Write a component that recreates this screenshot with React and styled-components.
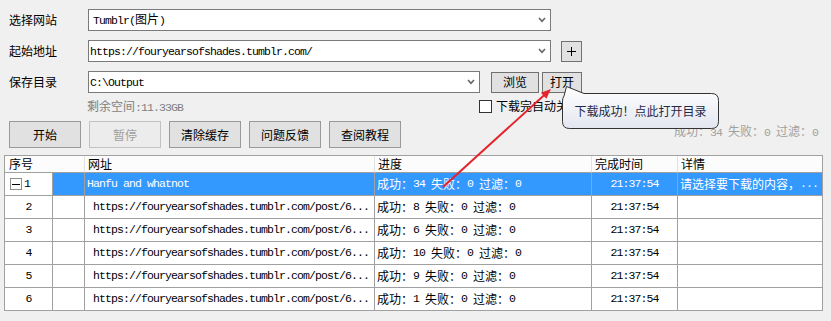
import React from 'react';
import styled, { createGlobalStyle } from 'styled-components';

const GlobalStyle = createGlobalStyle`
  html, body { margin: 0; padding: 0; background: #f0f0f0; }
  body {
    font-family: "Noto Sans CJK SC", "Noto Sans", sans-serif;
    font-size: 12px;
    color: #000;
  }
`;

const Window = styled.div`
  position: relative;
  width: 831px;
  height: 321px;
  box-sizing: border-box;
  padding: 9px 0 0 4px;
  background: #f0f0f0;
  overflow: hidden;
  display: flex;
  flex-direction: column;
`;

const Ascii = styled.span`
  font-family: "Liberation Mono", "DejaVu Sans Mono", monospace;
  font-size: 11.5px;
  letter-spacing: -0.9px;
`;

function Mixed({ text }) {
  const parts = text.split(/([\x20-\x7e]+)/);
  return parts.map((p, i) => {
    if (!p) return null;
    if (i % 2 === 1) return <Ascii key={i}>{p}</Ascii>;
    return <React.Fragment key={i}>{p}</React.Fragment>;
  });
}

const FormRow = styled.div`
  display: flex;
  align-items: center;
  height: 22px;
  padding-left: 5px;
  & + & { margin-top: 9px; }
`;

const Label = styled.div`
  width: 79px;
  flex-shrink: 0;
  line-height: 22px;
`;

const Combo = styled.div`
  box-sizing: border-box;
  width: ${p => p.$w}px;
  height: 22px;
  flex-shrink: 0;
  border: 1px solid #7a7a7a;
  background: #fff;
  display: flex;
  align-items: center;
  padding: 0 4px 0 ${p => p.$pad}px;
  white-space: pre;
`;

const ComboText = styled.span`
  flex: 1;
  overflow: hidden;
  line-height: 20px;
`;

const Chevron = () => (
  <svg width="8" height="6" viewBox="0 0 8 6">
    <path d="M1 1 L4 4.4 L7 1" fill="none" stroke="#666" strokeWidth="1.6" />
  </svg>
);

const SmallButton = styled.button`
  box-sizing: border-box;
  width: ${p => p.$w}px;
  height: ${p => p.$h}px;
  margin: 0 0 0 ${p => p.$ml}px;
  padding: 0;
  flex-shrink: 0;
  border: 1px solid #707070;
  background: #e1e1e1;
  font: inherit;
  font-size: 12px;
  color: #000;
  display: flex;
  align-items: center;
  justify-content: center;
  line-height: 1;
`;

const InfoRow = styled.div`
  display: flex;
  align-items: flex-start;
  box-sizing: border-box;
  height: 28px;
  padding: 6px 0 0 5px;
`;

const FreeSpace = styled.div`
  margin-left: 78px;
  width: 392px;
  flex-shrink: 0;
  color: #7f7f7f;
  line-height: 13px;
  white-space: pre;
`;

const CheckBox = styled.div`
  box-sizing: border-box;
  width: 13px;
  height: 13px;
  margin-top: 1px;
  border: 1px solid #333;
  background: #fff;
  flex-shrink: 0;
`;

const CheckText = styled.div`
  margin-left: 4px;
  line-height: 13px;
  white-space: nowrap;
`;

const ButtonRow = styled.div`
  display: flex;
  align-items: flex-start;
  height: 27px;
  padding-left: 5px;
  gap: 8px;
`;

const ActionButton = styled.button`
  box-sizing: border-box;
  width: 72px;
  height: 27px;
  margin: 0;
  padding: 0;
  border: 1px solid ${p => (p.disabled ? '#c2c2c2' : '#9a9a9a')};
  background: ${p => (p.disabled ? '#ececec' : '#e1e1e1')};
  color: ${p => (p.disabled ? '#a0a0a0' : '#000')};
  font: inherit;
  font-size: 12px;
  line-height: 1;
  display: flex;
  align-items: center;
  justify-content: center;
`;

const Stats = styled.div`
  margin: 4px 13px 0 auto;
  color: #a0a0a0;
  line-height: 12px;
  white-space: pre;
`;

const Grid = styled.div`
  margin-top: 7px;
  width: 819px;
  box-sizing: border-box;
  border: 1px solid #a0a0a0;
  border-bottom: none;
  background: #fff;
`;

const HeaderRow = styled.div`
  display: grid;
  grid-template-columns: 80px 290px 217px 86px 144px;
  height: 17px;
`;

const HeaderCell = styled.div`
  box-sizing: border-box;
  height: 17px;
  padding-left: ${p => p.$pl || 3}px;
  background: #fcfcfc;
  border-right: ${p => (p.$last ? 'none' : '1px solid #e2e2e2')};
  border-bottom: 1px solid #a0a0a0;
  line-height: 16px;
  white-space: nowrap;
`;

const BodyRow = styled.div`
  display: grid;
  grid-template-columns: 48px 32px 290px 217px 86px 144px;
  height: 23px;
`;

const Cell = styled.div`
  box-sizing: border-box;
  height: 23px;
  border-right: ${p => (p.$last ? 'none' : '1px solid #a0a0a0')};
  border-bottom: 1px solid #a0a0a0;
  background: ${p => (p.$sel ? '#3399ff' : '#fff')};
  color: ${p => (p.$sel ? '#fff' : '#000')};
  display: flex;
  align-items: center;
  justify-content: ${p => (p.$center ? 'center' : 'flex-start')};
  padding-left: ${p => p.$pl || 0}px;
  line-height: 14px;
  white-space: pre;
  overflow: hidden;
`;

const Expander = styled.div`
  box-sizing: border-box;
  width: 12px;
  height: 12px;
  border: 1px solid #8f8f8f;
  background: #fff;
  display: flex;
  align-items: center;
  justify-content: center;
  margin-right: 2px;
  &::before {
    content: '';
    width: 8px;
    height: 1px;
    background: #000;
  }
`;

const BalloonWrap = styled.div`
  position: absolute;
  left: 558px;
  top: 82px;
  width: 165px;
  height: 50px;
  box-sizing: border-box;
  padding: 11px 0 0 4px;
  z-index: 3;
`;

const BalloonShape = styled.svg`
  position: absolute;
  left: 0;
  top: 0;
`;

const BalloonText = styled.div`
  position: relative;
  width: 157px;
  height: 36px;
  display: flex;
  align-items: center;
  justify-content: center;
  color: #1f2b48;
  font-size: 12px;
  line-height: 14px;
`;

const ArrowLayer = styled.svg`
  position: absolute;
  left: 0;
  top: 0;
  pointer-events: none;
  z-index: 4;
`;

const rows = [
  { n: 2, p: '成功：8 失败：0 过滤：0' },
  { n: 3, p: '成功：6 失败：0 过滤：0' },
  { n: 4, p: '成功：10 失败：0 过滤：0' },
  { n: 5, p: '成功：9 失败：0 过滤：0' },
  { n: 6, p: '成功：1 失败：0 过滤：0' },
];

const URL = 'https://fouryearsofshades.tumblr.com/post/6...';

export default function App() {
  return (
    <>
      <GlobalStyle />
      <Window>
        <FormRow>
          <Label>选择网站</Label>
          <Combo $w={463} $pad={4}>
            <ComboText><Mixed text="Tumblr(图片)" /></ComboText>
            <Chevron />
          </Combo>
        </FormRow>
        <FormRow>
          <Label>起始地址</Label>
          <Combo $w={463} $pad={1}>
            <ComboText><Mixed text="https://fouryearsofshades.tumblr.com/" /></ComboText>
            <Chevron />
          </Combo>
          <SmallButton $w={21} $h={21} $ml={10}>
            <svg width="9" height="9" viewBox="0 0 9 9">
              <path d="M4.5 0 V9 M0 4.5 H9" stroke="#000" strokeWidth="1" />
            </svg>
          </SmallButton>
        </FormRow>
        <FormRow>
          <Label>保存目录</Label>
          <Combo $w={392} $pad={1}>
            <ComboText><Mixed text="C:\Output" /></ComboText>
            <Chevron />
          </Combo>
          <SmallButton $w={48} $h={21} $ml={11}>浏览</SmallButton>
          <SmallButton $w={40} $h={21} $ml={3}>打开</SmallButton>
        </FormRow>
        <InfoRow>
          <FreeSpace>剩余空间<Ascii>:11.33GB</Ascii></FreeSpace>
          <CheckBox />
          <CheckText>下载完自动关闭</CheckText>
        </InfoRow>
        <ButtonRow>
          <ActionButton>开始</ActionButton>
          <ActionButton disabled>暂停</ActionButton>
          <ActionButton>清除缓存</ActionButton>
          <ActionButton>问题反馈</ActionButton>
          <ActionButton>查阅教程</ActionButton>
          <Stats><Mixed text="成功：34 失败：0 过滤：0" /></Stats>
        </ButtonRow>
        <Grid>
          <HeaderRow>
            <HeaderCell $pl={4}>序号</HeaderCell>
            <HeaderCell>网址</HeaderCell>
            <HeaderCell>进度</HeaderCell>
            <HeaderCell>完成时间</HeaderCell>
            <HeaderCell $last>详情</HeaderCell>
          </HeaderRow>
          <BodyRow>
            <Cell $pl={5}><Expander /><Ascii>1</Ascii></Cell>
            <Cell $sel />
            <Cell $sel $pl={2}><Mixed text="Hanfu and whatnot" /></Cell>
            <Cell $sel $pl={2}><Mixed text="成功：34 失败：0 过滤：0" /></Cell>
            <Cell $sel $center><Ascii>21:37:54</Ascii></Cell>
            <Cell $sel $last $pl={2}><Mixed text="请选择要下载的内容，..." /></Cell>
          </BodyRow>
          {rows.map(r => (
            <BodyRow key={r.n}>
              <Cell $center><Ascii>{String(r.n)}</Ascii></Cell>
              <Cell />
              <Cell $pl={8}><Ascii>{URL}</Ascii></Cell>
              <Cell $pl={2}><Mixed text={r.p} /></Cell>
              <Cell $center><Ascii>21:37:54</Ascii></Cell>
              <Cell $last />
            </BodyRow>
          ))}
        </Grid>

        <BalloonWrap>
          <BalloonShape width="165" height="50" viewBox="0 0 165 50">
            <defs>
              <linearGradient id="bg" x1="0" y1="0" x2="0" y2="1">
                <stop offset="0" stopColor="#ffffff" />
                <stop offset="1" stopColor="#e4e6f0" />
              </linearGradient>
            </defs>
            <path
              d="M26 11.5 L153.5 11.5 Q160.5 11.5 160.5 18.5 L160.5 39.5 Q160.5 46.5 153.5 46.5 L11.5 46.5 Q4.5 46.5 4.5 39.5 L4.5 19 Q4.5 16 6 14 L8.5 4.5 Z"
              fill="url(#bg)"
              stroke="#333"
              strokeWidth="1"
            />
          </BalloonShape>
          <BalloonText>下载成功！点此打开目录</BalloonText>
        </BalloonWrap>

        <ArrowLayer width="831" height="321" viewBox="0 0 831 321">
          <line x1="443" y1="187" x2="546" y2="93.5" stroke="#e4232a" strokeWidth="2" />
          <polygon points="551,89 546.3,98.7 540.9,92.7" fill="#e4232a" />
        </ArrowLayer>
      </Window>
    </>
  );
}
